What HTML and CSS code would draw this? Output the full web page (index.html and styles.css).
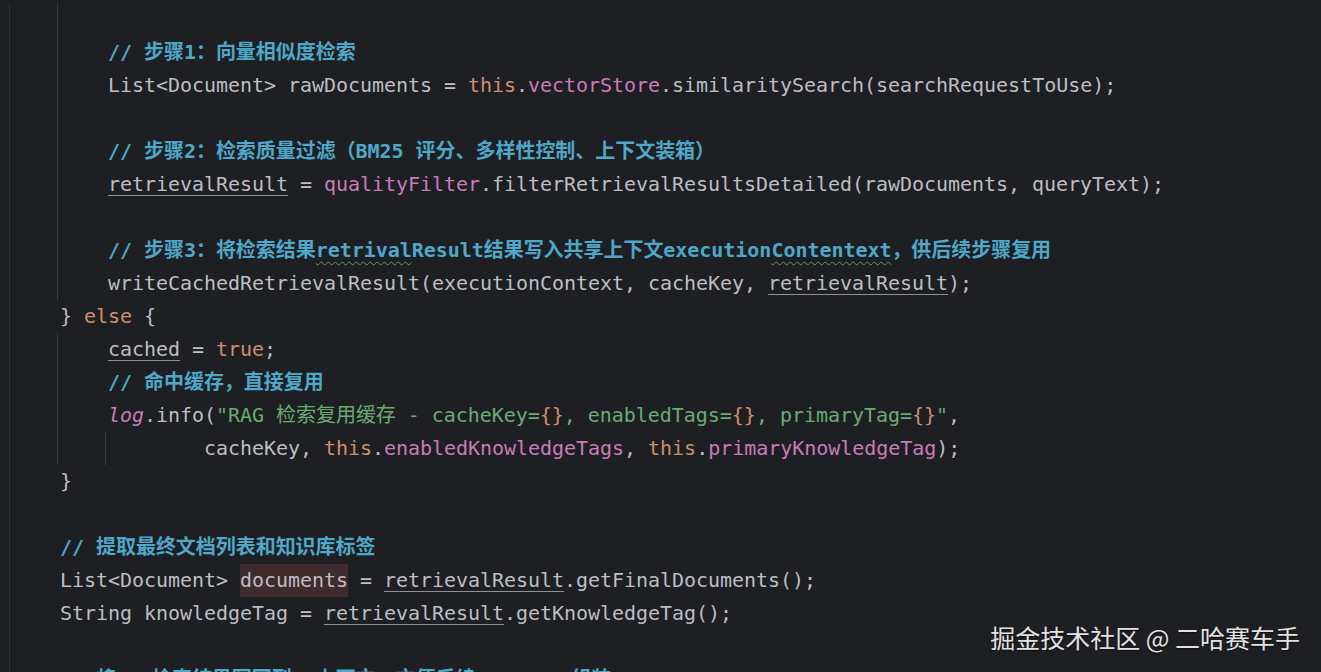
FILE: index.html
```html
<!DOCTYPE html>
<html lang="zh">
<head>
<meta charset="utf-8">
<title>Editor</title>
<link rel="stylesheet" href="styles.css">
</head>
<body>
<div class="editor">
  <div class="code">
    <div class="ln g2"> </div>
    <div class="ln g2">        <span class="c">// 步骤1：向量相似度检索</span></div>
    <div class="ln g2">        List&lt;Document&gt; rawDocuments = <span class="k">this</span>.<span class="f">vectorStore</span>.similaritySearch(searchRequestToUse);</div>
    <div class="ln g2"> </div>
    <div class="ln g2">        <span class="c">// 步骤2：检索质量过滤（BM25 评分、多样性控制、上下文装箱）</span></div>
    <div class="ln g2">        <span class="u">retrievalResult</span> = <span class="f">qualityFilter</span>.filterRetrievalResultsDetailed(rawDocuments, queryText);</div>
    <div class="ln g2"> </div>
    <div class="ln g2">        <span class="c">// 步骤3：将检索结果<span class="typo">retrival</span>Result结果写入共享上下文execution<span class="typo">Contentext</span>，供后续步骤复用</span></div>
    <div class="ln g2">        writeCachedRetrievalResult(executionContext, cacheKey, <span class="u">retrievalResult</span>);</div>
    <div class="ln g1">    } <span class="k">else</span> {</div>
    <div class="ln g2">        <span class="u">cached</span> = <span class="k">true</span>;</div>
    <div class="ln g2">        <span class="c">// 命中缓存，直接复用</span></div>
    <div class="ln g2">        <span class="f i">log</span>.info(<span class="s">"RAG 检索复用缓存 - cacheKey=<span class="k">{}</span>, enabledTags=<span class="k">{}</span>, primaryTag=<span class="k">{}</span>"</span>,</div>
    <div class="ln g3">                cacheKey, <span class="k">this</span>.<span class="f">enabledKnowledgeTags</span>, <span class="k">this</span>.<span class="f">primaryKnowledgeTag</span>);</div>
    <div class="ln g1">    }</div>
    <div class="ln g1"> </div>
    <div class="ln g1">    <span class="c">// 提取最终文档列表和知识库标签</span></div>
    <div class="ln g1">    List&lt;Document&gt; <span class="hl">documents</span> = <span class="u">retrievalResult</span>.getFinalDocuments();</div>
    <div class="ln g1">    String knowledgeTag = <span class="u">retrievalResult</span>.getKnowledgeTag();</div>
    <div class="ln g1"> </div>
    <div class="ln g1">    <span class="c">// 将RAG检索结果写回到IR上下文，方便后续 prompt 组装</span></div>
  </div>
  <div class="watermark">掘金技术社区 @ 二哈赛车手</div>
</div>
</body>
</html>
```

FILE: styles.css
```css
html, body {
  margin: 0;
  padding: 0;
  background: #1e1f22;
  overflow: hidden;
}

.editor {
  position: relative;
  width: 1321px;
  height: 672px;
  background: #1e1f22;
  overflow: hidden;
}

.code {
  padding-top: 3px;
  padding-left: 12px;
  font-family: "DejaVu Sans Mono", "Noto Sans CJK SC", monospace;
  font-size: 20px;
  letter-spacing: -0.04px;
  color: #bcbec4;
}

.ln {
  height: 33px;
  line-height: 33px;
  white-space: pre;
  margin-left: -12px;
  padding-left: 12px;
}

.g1 {
  background:
    linear-gradient(#2f3135, #2f3135) 9px 0 / 1px 100% no-repeat;
}

.g2 {
  background:
    linear-gradient(#2f3135, #2f3135) 9px 0 / 1px 100% no-repeat,
    linear-gradient(#393b40, #393b40) 57px 0 / 1px 100% no-repeat;
}

.g3 {
  background:
    linear-gradient(#2f3135, #2f3135) 9px 0 / 1px 100% no-repeat,
    linear-gradient(#393b40, #393b40) 57px 0 / 1px 100% no-repeat,
    linear-gradient(#3c3e43, #3c3e43) 105px 0 / 1px 100% no-repeat;
}

.c {
  color: #4fa7c9;
  font-weight: bold;
}

.k {
  color: #cf8e6d;
}

.f {
  color: #c77dbb;
}

.i {
  font-style: italic;
}

.s {
  color: #6aab73;
}

.u {
  text-decoration: underline;
  text-decoration-color: #8f9197;
  text-decoration-thickness: 1px;
  text-underline-offset: 4px;
}

.typo {
  text-decoration: underline wavy #6c9a5e;
  text-decoration-thickness: 1px;
  text-underline-offset: 4px;
}

.hl {
  display: inline-block;
  height: 33px;
  background: #3f2a2d;
}

.watermark {
  position: absolute;
  right: 21px;
  top: 620px;
  font-family: "Noto Sans CJK SC", sans-serif;
  font-size: 25px;
  line-height: 34px;
  color: #e2e2e2;
  text-shadow: 0 1px 2px rgba(0, 0, 0, 0.6);
  white-space: nowrap;
}
```
